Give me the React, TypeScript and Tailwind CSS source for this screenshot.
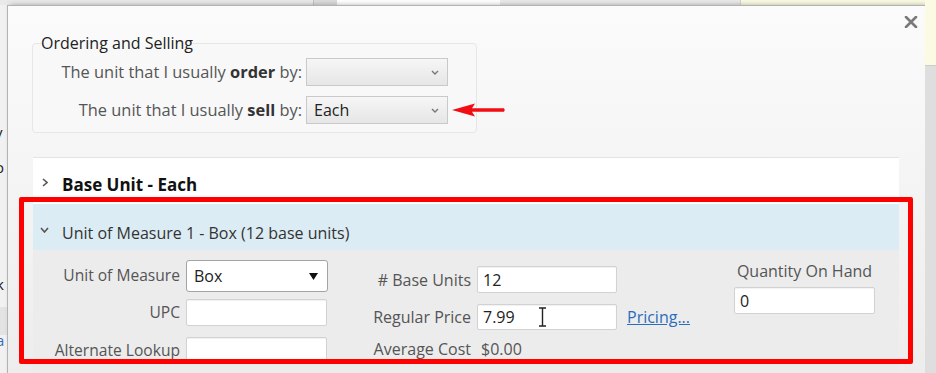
import React from "react";

function Chevron({ dir }: { dir: "right" | "down" }) {
  return dir === "right" ? (
    <svg width="6" height="9" viewBox="0 0 6 9">
      <path d="M1 1 L5 4.5 L1 8" fill="none" stroke="#555" strokeWidth="1.6" />
    </svg>
  ) : (
    <svg width="9" height="6" viewBox="0 0 9 6">
      <path d="M1 1 L4.5 5 L8 1" fill="none" stroke="#555" strokeWidth="1.6" />
    </svg>
  );
}

function GraySelect({ value }: { value?: string }) {
  return (
    <div className="h-[28px] w-[142px] border border-[#c9c9c9] bg-gradient-to-b from-[#f6f6f6] to-[#e6e6e6] flex items-center justify-between pl-[7px] pr-[8px] text-[16px] text-[#222]">
      <span>{value ?? ""}</span>
      <svg width="8" height="5" viewBox="0 0 8 5">
        <path d="M1 1 L4 4 L7 1" fill="none" stroke="#777" strokeWidth="1.4" />
      </svg>
    </div>
  );
}

function TextInput({ value, w = "w-[141px]", h = "h-[27px]", children }: { value?: string; w?: string; h?: string; children?: React.ReactNode }) {
  return (
    <div className={`${w} ${h} relative bg-white border border-[#d2d2d2] rounded-[2px] shadow-[inset_0_1px_1px_rgba(0,0,0,0.06)] flex items-center pl-[5px] text-[16px] text-[#222]`}>
      <span>{value ?? ""}</span>
      {children}
    </div>
  );
}

export default function App() {
  return (
    <div className="relative w-[936px] h-[373px] overflow-hidden flex bg-[#e8e8e8] font-['Open_Sans',sans-serif] text-[16px] text-[#555]">
      {/* background page, left sliver */}
      <div className="w-[7px] h-full bg-[#f1f1f1] overflow-hidden flex flex-col text-[15px] text-[#222] leading-[18px]">
        <div className="h-[5px] bg-[#e9e9e9]" />
        <span className="mt-[118px] ml-[-5px]">v</span>
        <span className="mt-[17px] ml-[-5px]">o</span>
        <span className="mt-[99px] ml-[-4px]">k</span>
        <div className="mt-[14px] h-[28px] bg-[#e3e3e3]" />
        <span className="mt-[-4px] ml-[-4px] text-[#3b6fb6]">a</span>
      </div>

      {/* modal column */}
      <div className="w-[918px] h-full flex flex-col">
        <div className="h-[5px] flex shrink-0">
          <div className="w-[306px] bg-[#e9e9e9]" />
          <div className="w-[24px] bg-[#dcdcdc] border-l border-[#c4c4c4]" />
          <div className="w-[163px] bg-white" />
          <div className="w-[240px] bg-[#e9e9e9]" />
          <div className="flex-1 bg-[#fbfbe3] border-l border-[#d6d6c0]" />
        </div>

        <div className="flex-1 border-l border-t border-[#b3b3b3] bg-gradient-to-b from-[#fbfbfb] to-[#ededed] shadow-[3px_0_5px_rgba(0,0,0,0.3)] flex flex-col">
          {/* close */}
          <div className="flex justify-end pt-[10px] pr-[7px] shrink-0">
            <svg width="14" height="12" viewBox="0 0 14 12">
              <path d="M2 1 L12 11 M12 1 L2 11" stroke="#7a7a7a" strokeWidth="2.6" strokeLinecap="round" />
            </svg>
          </div>

          {/* Ordering and Selling */}
          <fieldset className="mt-[5px] ml-[24px] w-[445px] border border-[#e6e6e6] rounded-[4px] bg-[#f8f8f8] pb-[8px] shrink-0">
            <legend className="ml-[8px] text-[16px] text-[#222] leading-[20px]">Ordering and Selling</legend>
            <div className="flex flex-col gap-[10px] pt-[5px]">
              <div className="flex items-center">
                <div className="w-[273px] text-right pr-[4px] text-[16.4px]">
                  The unit that I usually <b className="text-[#333]">order</b> by:
                </div>
                <GraySelect />
              </div>
              <div className="flex items-center">
                <div className="w-[273px] text-right pr-[4px] text-[16.4px]">
                  The unit that I usually <b className="text-[#333]">sell</b> by:
                </div>
                <GraySelect value="Each" />
              </div>
            </div>
          </fieldset>

          {/* accordion */}
          <div className="mt-[24px] ml-[25px] w-[866px] flex-1 flex flex-col border-t border-[#e3e3e3]">
            <div className="h-[46px] pt-[8px] bg-white flex items-center shrink-0">
              <div className="w-[29px] pl-[9px] flex items-center mt-[-5px]">
                <Chevron dir="right" />
              </div>
              <span className="text-[17px] font-bold text-[#111]">Base Unit - Each</span>
            </div>
            <div className="h-[46px] pt-[12px] bg-[#dcecf4] flex items-center shrink-0">
              <div className="w-[29px] pl-[7px] flex items-center mt-[-6px]">
                <Chevron dir="down" />
              </div>
              <span className="text-[16px] text-[#333]">Unit of Measure 1 - Box (12 base units)</span>
            </div>

            <div className="flex-1 bg-[#ececec] flex">
              {/* col 1 */}
              <div className="flex flex-col pt-[10px]">
                <div className="flex items-center">
                  <div className="w-[153px] text-right pr-[6px] text-[15.6px]">Unit of Measure</div>
                  <div className="w-[142px] h-[32px] bg-white border border-[#a3a3a3] rounded-[3px] flex items-center justify-between pl-[7px] pr-[9px] text-[16px] text-[#222]">
                    <span>Box</span>
                    <svg width="9" height="7" viewBox="0 0 9 7">
                      <path d="M0 0 L9 0 L4.5 7 Z" fill="#111" />
                    </svg>
                  </div>
                </div>
                <div className="flex items-center mt-[7px]">
                  <div className="w-[153px] text-right pr-[6px] text-[15.6px]">UPC</div>
                  <TextInput />
                </div>
                <div className="flex items-center mt-[11px]">
                  <div className="w-[153px] text-right pr-[6px] text-[15.6px]">Alternate Lookup</div>
                  <TextInput />
                </div>
              </div>

              {/* col 2 */}
              <div className="flex flex-col pt-[16px]">
                <div className="flex items-center">
                  <div className="w-[149px] text-right pr-[6px]"># Base Units</div>
                  <TextInput value="12" w="w-[140px]" />
                </div>
                <div className="flex items-center mt-[11px]">
                  <div className="w-[149px] text-right pr-[6px]">Regular Price</div>
                  <TextInput value="7.99" w="w-[140px]" h="h-[26px]">
                    <svg className="absolute left-[60px] top-[2px]" width="9" height="20" viewBox="0 0 9 20">
                      <path d="M1 1 L8 1 M4.5 1 L4.5 19 M1 19 L8 19" stroke="#222" strokeWidth="1.4" fill="none" />
                    </svg>
                  </TextInput>
                  <a className="ml-[10px] text-[#2a6ebb] underline">Pricing...</a>
                </div>
                <div className="flex items-center mt-[7px]">
                  <div className="w-[149px] text-right pr-[6px]">Average Cost</div>
                  <span className="pl-[4px]">$0.00</span>
                </div>
              </div>

              {/* col 3 */}
              <div className="flex flex-col items-center pt-[10px] ml-[44px] w-[141px]">
                <div className="leading-[22px] whitespace-nowrap">Quantity On Hand</div>
                <div className="mt-[5px]">
                  <TextInput value="0" w="w-[141px]" />
                </div>
              </div>
            </div>
          </div>
        </div>
      </div>

      {/* right sliver of page behind */}
      <div className="flex-1 h-full flex flex-col">
        <div className="h-[66px] bg-[#fbfbe3] border-b border-[#cfcfc0]" />
        <div className="flex-1 bg-[#dedede]" />
      </div>

      {/* annotations */}
      <svg className="absolute left-[452px] top-[103px]" width="54" height="14" viewBox="0 0 54 14">
        <path d="M0 7 L23 0.5 L20 5.2 L52 5.2 Q53.5 7 52 8.8 L20 8.8 L23 13.5 Z" fill="#f20d12" />
      </svg>
      <div className="absolute left-[19px] top-[197px] w-[894px] h-[167px] border-[5px] border-[#ff0000] rounded-[2px]" />
    </div>
  );
}
